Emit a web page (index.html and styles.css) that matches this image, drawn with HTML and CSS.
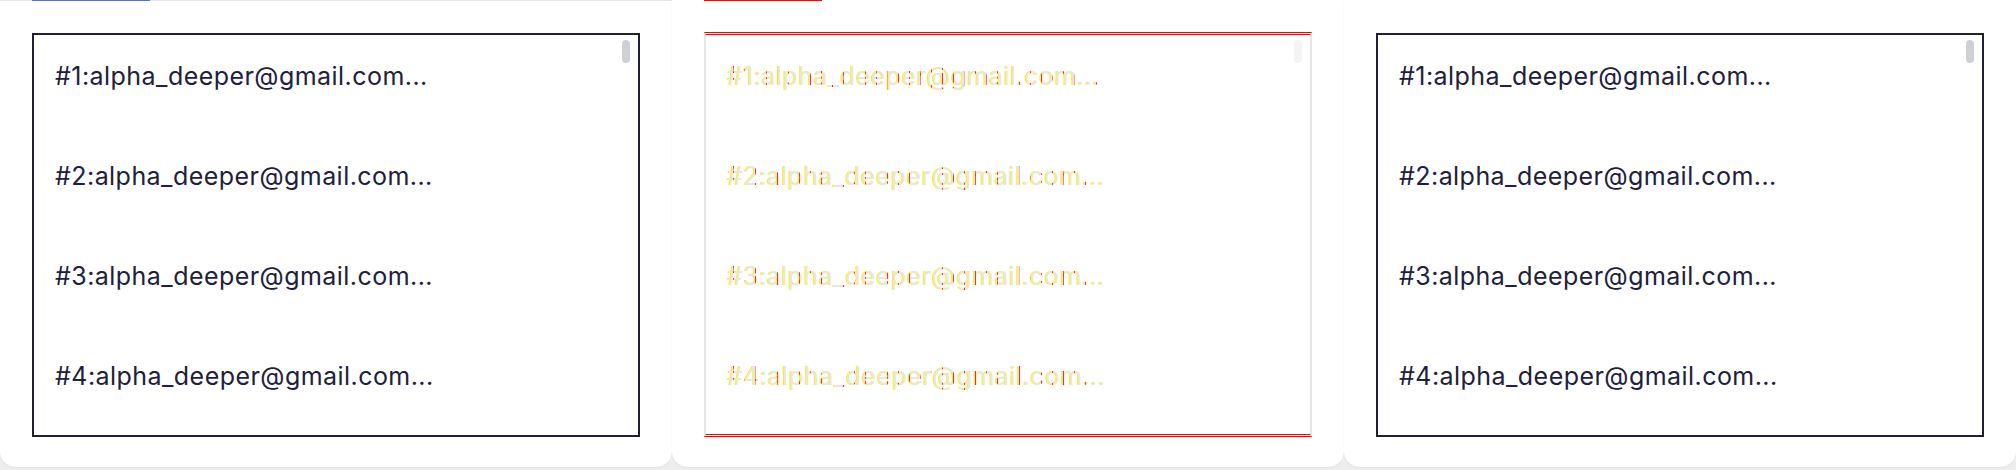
FILE: index.html
```html
<!DOCTYPE html>
<html lang="en">
<head>
<meta charset="utf-8">
<title>Accounts</title>
<link rel="stylesheet" href="styles.css">
</head>
<body>
<div class="row">
  <section class="card">
    <div class="tabbar tabbar-gray"><span class="indicator indicator-blue"></span></div>
    <div class="box box-dark">
      <ul class="list">
        <li>#1:alpha_deeper@gmail.com...</li>
        <li>#2:alpha_deeper@gmail.com...</li>
        <li>#3:alpha_deeper@gmail.com...</li>
        <li>#4:alpha_deeper@gmail.com...</li>
      </ul>
      <span class="thumb"></span>
    </div>
  </section>
  <section class="card">
    <div class="tabbar"><span class="indicator indicator-red"></span></div>
    <div class="box box-diff">
      <ul class="list list-diff">
        <li><span>#1:alpha_deeper@gmail.com...</span></li>
        <li><span>#2:alpha_deeper@gmail.com...</span></li>
        <li><span>#3:alpha_deeper@gmail.com...</span></li>
        <li><span>#4:alpha_deeper@gmail.com...</span></li>
      </ul>
      <span class="thumb thumb-faint"></span>
    </div>
  </section>
  <section class="card">
    <div class="tabbar"></div>
    <div class="box box-dark">
      <ul class="list">
        <li>#1:alpha_deeper@gmail.com...</li>
        <li>#2:alpha_deeper@gmail.com...</li>
        <li>#3:alpha_deeper@gmail.com...</li>
        <li>#4:alpha_deeper@gmail.com...</li>
      </ul>
      <span class="thumb"></span>
    </div>
  </section>
</div>
</body>
</html>
```
FILE: styles.css
```css
* { box-sizing: border-box; }
html, body { margin: 0; padding: 0; }
body {
  background: #eeeeee;
  font-family: Inter, "Noto Sans", sans-serif;
  width: 2016px;
  height: 470px;
  overflow: hidden;
}
.row {
  display: flex;
}
.card {
  width: 672px;
  height: 467px;
  background: #ffffff;
  border-radius: 0 0 16px 16px;
  box-shadow: 0 1px 2px rgba(0, 0, 0, 0.05);
  padding: 0 32px;
  display: flex;
  flex-direction: column;
}
.tabbar {
  height: 1px;
  margin: 0 -32px;
  padding-left: 32px;
  display: flex;
}
.tabbar-gray { background: #e6e6e8; }
.indicator {
  width: 118px;
  height: 1px;
}
.indicator-blue { background: #5471d8; }
.indicator-red { background: #ff0000; }
.box {
  position: relative;
  width: 608px;
  overflow: hidden;
}
.box-dark {
  margin-top: 32px;
  height: 404px;
  border: 2px solid #1f1f3b;
}
.box-diff {
  margin-top: 31px;
  height: 405px;
  border-left: 2px solid #e6e6e6;
  border-right: 2px solid #e6e6e6;
  border-top: 3px double #ff0000;
  border-bottom: 3px double #ff0000;
}
.list {
  list-style: none;
  margin: 0;
  padding: 25px 21px 0;
}
.list li {
  font-size: 25px;
  line-height: 32px;
  height: 32px;
  margin-bottom: 68px;
  color: #20203c;
  white-space: nowrap;
  letter-spacing: 0.45px;
}
.list-diff li span {
  color: transparent;
  background: repeating-linear-gradient(90deg, #e6e6e6 0 6px, #ff2a2a 6px 7px, #e6e6e6 7px 11px);
  -webkit-background-clip: text;
  background-clip: text;
  filter: drop-shadow(-1px 0 0 #fff200);
}
.thumb {
  position: absolute;
  top: 5px;
  right: 8px;
  width: 8px;
  height: 23px;
  border-radius: 4px;
  background: #cfd0d6;
}
.thumb-faint {
  top: 5px;
  background: #f4f4f4;
}
```
